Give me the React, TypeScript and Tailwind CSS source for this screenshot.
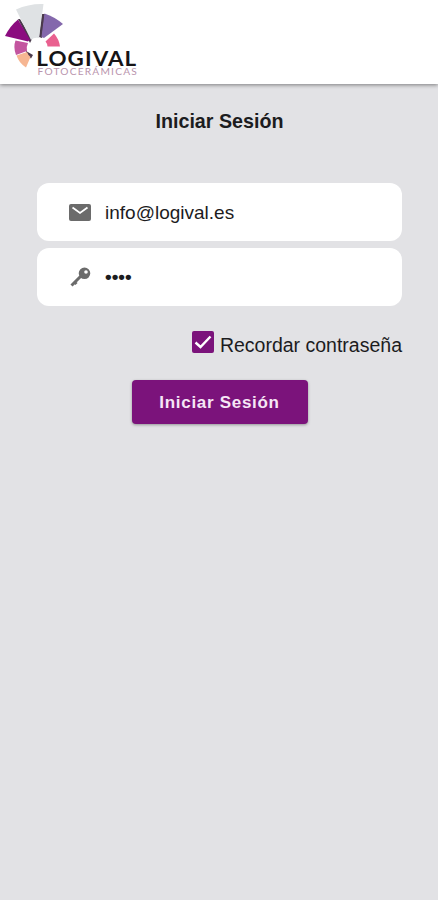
import { useState } from "react";

function Logo() {
  return (
    <svg viewBox="0 0 140 82" className="h-[82px] w-[140px]" role="img" aria-label="Logival Fotocerámicas">
      <path d="M41.500 14 L45 14 L42 38 L39 37 Z M18 19 L20 19 L32 39 L30 43 Z M26 51 L33 55 L31 58.500 L26 55 Z" fill="#4a3a4c" />
      <path d="M16 9.500 Q29 3.500 43.500 4 L39 38 Q34 37 31 40 Z" fill="#dfe2e4" />
      <path d="M44.500 13.500 Q55 17 63 24 L44 38 L41.500 37 Z" fill="#8468ac" />
      <path d="M18 19.500 L30 39.500 L28 41.500 L5 36 Q10 26 18 19.500 Z" fill="#8b0c7f" />
      <path d="M54 33.500 Q59 39 60 46.500 L47.500 46.500 Q47 43 45.500 41.500 Z" fill="#e9608f" />
      <path d="M15.500 40.500 L28 43 Q26 47 27 51 L16 55 Q13 47 15.500 40.500 Z" fill="#c3559f" />
      <path d="M16.500 55.500 L27 52 Q28 55 30.500 57 L26 67.500 Q19 63 16.500 55.500 Z" fill="#f6b692" />
      <text x="36.300" y="65.500" textLength="101" lengthAdjust="spacingAndGlyphs" letterSpacing="1" fontFamily="Lato, sans-serif" fontWeight="700" fontSize="20.500" fill="#161416">
        LOGIVAL
      </text>
      <text x="37.500" y="75.300" textLength="100.500" lengthAdjust="spacingAndGlyphs" letterSpacing="1" fontFamily="Lato, sans-serif" fontSize="8.500" fill="#b994ad">
        FOTOCERÁMICAS
      </text>
    </svg>
  );
}

function MailIcon() {
  return (
    <svg viewBox="0 0 22 17" className="h-[17px] w-[22px]">
      <rect width="22" height="17" rx="2" fill="#6b6b6b" />
      <path d="M3.500 3.500 L11 9 L18.500 3.500" fill="none" stroke="#fff" strokeWidth="1.800" />
    </svg>
  );
}

function KeyIcon() {
  return (
    <svg viewBox="0 0 22 22" className="h-[22px] w-[22px]">
      <path d="M12 10 L2.500 19.500 M5.500 16 L7.500 18" fill="none" stroke="#6b6b6b" strokeWidth="3" />
      <path fillRule="evenodd" d="M15.500 1.500 a5.800 5.800 0 1 1 0 11.600 a5.800 5.800 0 1 1 0 -11.600 Z M17 4.200 a1.800 1.800 0 1 0 0 3.600 a1.800 1.800 0 1 0 0 -3.600 Z" fill="#6b6b6b" />
    </svg>
  );
}

export default function App() {
  const [remember, setRemember] = useState(true);

  return (
    <div className="flex min-h-screen flex-col bg-[#e2e2e5] font-['Liberation_Sans',Arial,sans-serif] text-[#1c1c1e]">
      <header className="h-[84px] shrink-0 bg-white shadow-[0_1px_4px_rgba(0,0,0,0.45)]">
        <Logo />
      </header>

      <main className="flex flex-col pt-6 pr-9 pl-[37px]">
        <h1 className="text-center text-[19.700px] leading-[26px] font-bold">Iniciar Sesión</h1>

        {/* Credentials */}
        <div className="mt-[49px] flex flex-col gap-[7px]">
          <label className="flex h-[58px] items-center rounded-[12px] bg-white pl-8">
            <MailIcon />
            <span className="ml-[14px] pt-px text-[19px] leading-6">info@logival.es</span>
          </label>
          <label className="flex h-[58px] items-center rounded-[12px] bg-white pl-8">
            <KeyIcon />
            <span className="ml-[14px] text-[19px] leading-6 font-bold">••••</span>
          </label>
        </div>

        <div className="mt-6 flex items-start justify-end gap-[6px]">
          <button
            type="button"
            role="checkbox"
            aria-checked={remember}
            aria-label="Recordar contraseña"
            onClick={() => setRemember(!remember)}
            className="mt-px grid h-[22px] w-[22px] place-items-center rounded-[2px] bg-[#7b137b]"
          >
            {remember && (
              <svg viewBox="0 0 22 22" className="h-[22px] w-[22px]">
                <path d="M3.500 11.500 L8.500 16 L18.500 5.500" fill="none" stroke="#fff" strokeWidth="2.400" />
              </svg>
            )}
          </button>
          <span className="mt-[3px] text-[19.500px] leading-6">Recordar contraseña</span>
        </div>

        <button
          type="button"
          className="mt-[23px] h-[44px] w-[176px] self-center rounded-[4px] bg-[#7b137b] pt-px text-[17px] font-bold tracking-[0.7px] text-[#f6e6f6] shadow-[0_1px_3px_rgba(0,0,0,0.35)]"
        >
          Iniciar Sesión
        </button>
      </main>
    </div>
  );
}
